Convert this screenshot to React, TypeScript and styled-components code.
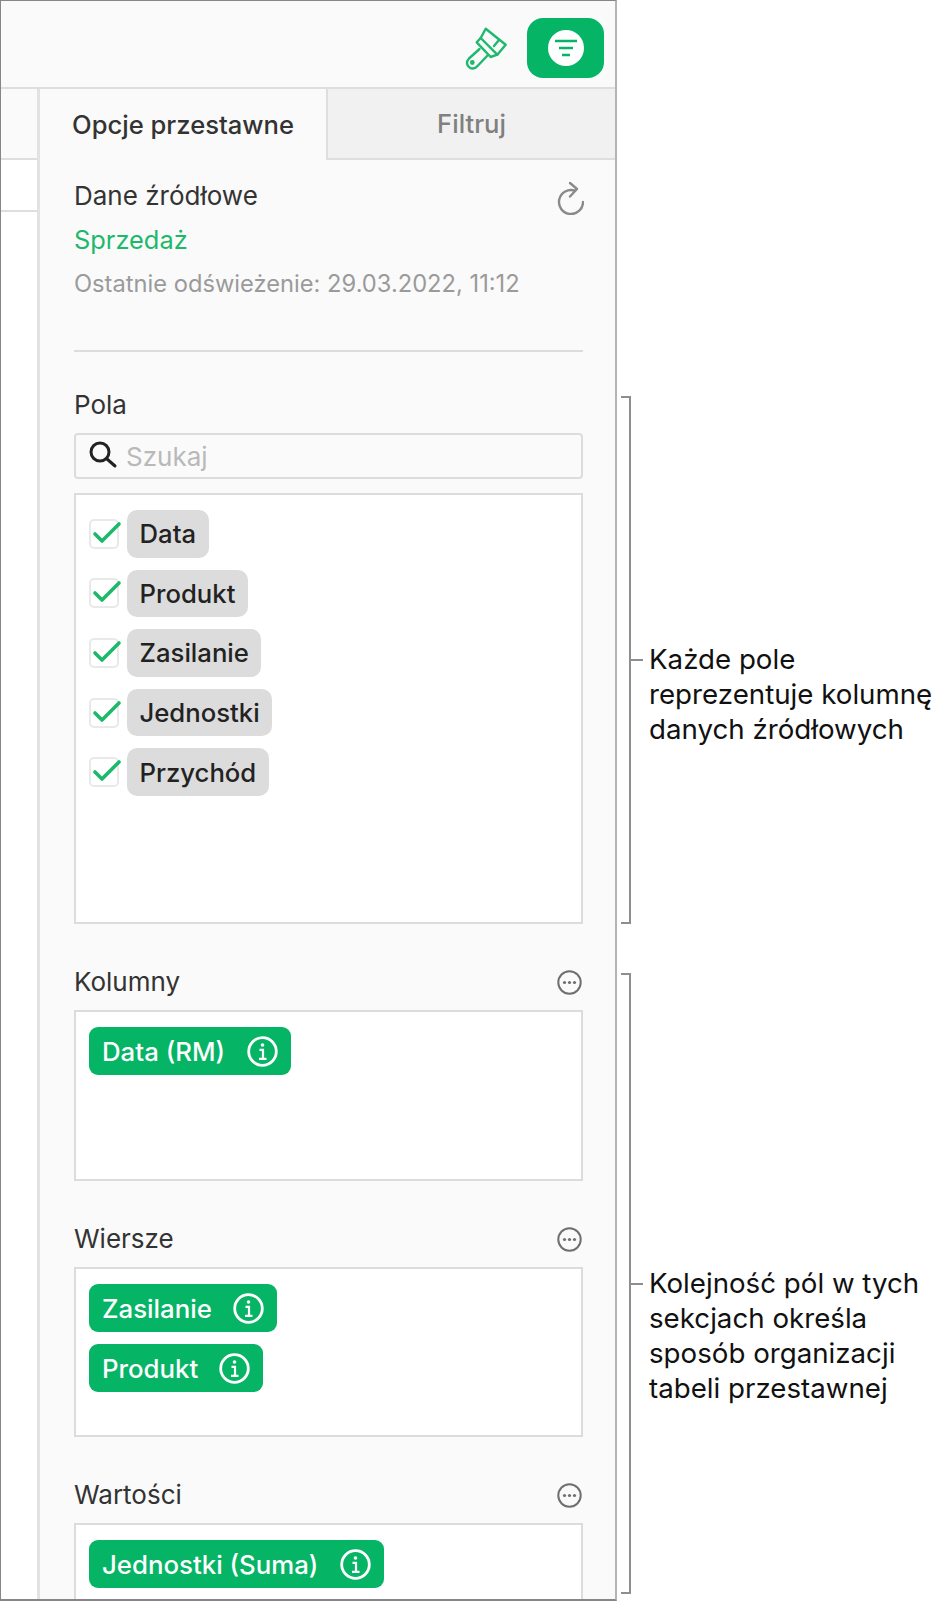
import React from 'react';
import styled, { createGlobalStyle } from 'styled-components';

const green = '#05b465';

const GlobalStyle = createGlobalStyle`
  html, body {
    margin: 0;
    padding: 0;
    background: #fff;
  }
  body {
    font-family: Inter, "Noto Sans", "Liberation Sans", sans-serif;
    -webkit-font-smoothing: antialiased;
  }
`;

const Page = styled.div`
  display: flex;
  width: 943px;
  height: 1602px;
  overflow: hidden;
  background: #fff;
`;

const Window = styled.div`
  flex: none;
  box-sizing: border-box;
  width: 617px;
  height: 1601px;
  display: flex;
  flex-direction: column;
  overflow: hidden;
  background: #fafafa;
  border: 1px solid #85858a;
  border-right: 2px solid #b4b4b6;
  border-bottom-width: 2px;
`;

const Toolbar = styled.div`
  flex: none;
  box-sizing: border-box;
  height: 88px;
  display: flex;
  justify-content: flex-end;
  align-items: center;
  gap: 15px;
  padding: 7px 11px 0 0;
  border-bottom: 2px solid #dedede;
`;

const FormatButton = styled.div`
  width: 77px;
  height: 60px;
  display: flex;
  align-items: center;
  justify-content: center;
  border-radius: 16px;
  background: ${green};
`;

const FormatDisc = styled.div`
  width: 36px;
  height: 36px;
  display: flex;
  align-items: center;
  justify-content: center;
  border-radius: 50%;
  background: #fff;
`;

const Body = styled.div`
  flex: 1;
  min-height: 0;
  display: flex;
`;

const SideStrip = styled.div`
  flex: none;
  width: 36px;
  display: flex;
  flex-direction: column;
  background: #fff;
`;

const StripHead = styled.div`
  box-sizing: border-box;
  height: 71px;
  background: #fafafa;
  border-bottom: 2px solid #dedede;
`;

const StripRow = styled.div`
  box-sizing: border-box;
  height: 52px;
  border-bottom: 2px solid #dedede;
`;

const Panel = styled.div`
  flex: 1;
  min-width: 0;
  display: flex;
  flex-direction: column;
  border-left: 3px solid #e2e2e2;
`;

const Tabs = styled.div`
  flex: none;
  height: 71px;
  display: flex;
`;

const Tab = styled.div<{ $active?: boolean }>`
  box-sizing: border-box;
  width: ${p => (p.$active ? '286px' : 'auto')};
  flex: ${p => (p.$active ? 'none' : '1')};
  display: flex;
  align-items: center;
  justify-content: center;
  padding-bottom: 1px;
  font-size: 25.6px;
  font-weight: 550;
  color: ${p => (p.$active ? '#333' : '#808080')};
  background: ${p => (p.$active ? 'transparent' : '#f1f1f1')};
  border-left: ${p => (p.$active ? 'none' : '2px solid #dedede')};
  border-bottom: ${p => (p.$active ? 'none' : '2px solid #dedede')};
`;

const Content = styled.div`
  padding: 22px 32px 0 34px;
`;

const HeadRow = styled.div`
  height: 28px;
  display: flex;
  align-items: center;
  justify-content: space-between;
`;

const Label = styled.div`
  font-size: 26px;
  line-height: 28px;
  color: #333;
`;

const SourceLink = styled.div`
  margin-top: 16px;
  font-size: 25.4px;
  line-height: 28px;
  color: #1db96b;
`;

const Meta = styled.div`
  margin-top: 16px;
  font-size: 23.7px;
  line-height: 28px;
  color: #9a9a9a;
`;

const Rule = styled.div`
  height: 2px;
  margin: 52px 0 39px;
  background: #dcdcdc;
`;

const Section = styled.div`
  margin-bottom: 44px;
`;

const SearchBox = styled.div`
  box-sizing: border-box;
  height: 46px;
  margin-top: 14px;
  display: flex;
  align-items: center;
  gap: 8px;
  padding-left: 12px;
  border: 2px solid #dcdcdc;
  border-radius: 4px;
  font-size: 26px;
  color: #b9b9b9;
`;

const DropBox = styled.div<{ $height: number }>`
  box-sizing: border-box;
  height: ${p => p.$height}px;
  margin-top: 14px;
  display: flex;
  flex-direction: column;
  align-items: flex-start;
  gap: 12px;
  padding: 15px 13px;
  background: #fff;
  border: 2px solid #dcdcdc;
`;

const FieldRow = styled.div`
  display: flex;
  align-items: center;
  gap: 8px;
`;

const Checkbox = styled.div`
  box-sizing: border-box;
  position: relative;
  width: 30px;
  height: 30px;
  border: 2px solid #e9e9e9;
  border-radius: 5px;
  background: #fff;
`;

const CheckMark = styled.svg`
  position: absolute;
  left: 2px;
  top: 2px;
  overflow: visible;
`;

const FieldChip = styled.div`
  height: 47.6px;
  display: flex;
  align-items: center;
  padding: 0 12.5px;
  border-radius: 10px;
  background: #dcdcdc;
  font-size: 25.7px;
  font-weight: 500;
  color: #222;
`;

const PivotChip = styled.div<{ $gap: number }>`
  height: 48px;
  display: flex;
  align-items: center;
  gap: ${p => p.$gap}px;
  padding: 0 13px;
  border-radius: 9px;
  background: ${green};
  font-size: 25.8px;
  font-weight: 500;
  color: #fff;
`;

const Annotations = styled.div`
  flex: 1;
  display: flex;
  flex-direction: column;
  padding: 396px 0 0 4px;
`;

const Callout = styled.div<{ $top?: number }>`
  display: flex;
  margin-top: ${p => p.$top ?? 0}px;
`;

const Bracket = styled.div<{ $height: number }>`
  box-sizing: border-box;
  flex: none;
  width: 10px;
  height: ${p => p.$height}px;
  border: 2.5px solid #8e8e8e;
  border-left: none;
`;

const Note = styled.div<{ $offset: number }>`
  display: flex;
  margin-top: ${p => p.$offset}px;
`;

const Tick = styled.div`
  flex: none;
  width: 12px;
  height: 2px;
  margin: 17px 6px 0 0;
  background: #8e8e8e;
`;

const NoteText = styled.div`
  font-size: 27.7px;
  line-height: 35px;
  color: #111;
  white-space: nowrap;
`;

const BrushIcon = () => (
  <svg width="48" height="50" viewBox="0 0 48 50" fill="none" stroke="#1fb96d" strokeWidth="2.4" strokeLinejoin="round" strokeLinecap="round">
    <path d="M21.7 5.7 L41.7 21.7 L33.3 31.7 L16.7 15 Z" />
    <path d="M30 23 L35 17" />
    <path d="M16.7 15 L12.7 19.3 L26.7 34 L33.3 31.7" />
    <path d="M15.5 26 L5 35.5 C2 38.5 2.5 42.5 5.5 44.5 C8.5 46.5 11.5 45.5 14 42.5 L24 32" />
    <circle cx="8.3" cy="39.5" r="1.2" />
  </svg>
);

const FilterIcon = () => (
  <svg width="24" height="20" viewBox="0 0 24 20" fill="none" stroke={green} strokeWidth="2.6">
    <path d="M1 3 H23 M5 10 H19 M8 17 H16" />
  </svg>
);

const RefreshGlyph = styled.svg`
  margin-right: -1px;
`;

const RefreshIcon = () => (
  <RefreshGlyph width="30" height="38" viewBox="0 0 30 38" fill="none" stroke="#8a8a8a" strokeWidth="2.4" strokeLinecap="round" strokeLinejoin="round">
    <path d="M21 13.7 A12 12 0 1 0 29 25" />
    <path d="M16 6 L23 12 L16 19.5" />
  </RefreshGlyph>
);

const SearchIcon = () => (
  <svg width="30" height="30" viewBox="0 0 30 30" fill="none" stroke="#222" strokeWidth="3" strokeLinecap="round">
    <circle cx="12" cy="11" r="9" />
    <path d="M19 18 L27 25" />
  </svg>
);

const EllipsisGlyph = styled.svg`
  margin-right: 1px;
`;

const EllipsisIcon = () => (
  <EllipsisGlyph width="25" height="25" viewBox="0 0 25 25" fill="none">
    <circle cx="12.5" cy="12.5" r="11.2" stroke="#6f6f6f" strokeWidth="2" />
    <circle cx="7.5" cy="12.5" r="1.6" fill="#6f6f6f" />
    <circle cx="12.5" cy="12.5" r="1.6" fill="#6f6f6f" />
    <circle cx="17.5" cy="12.5" r="1.6" fill="#6f6f6f" />
  </EllipsisGlyph>
);

const InfoIcon = () => (
  <svg width="31" height="31" viewBox="0 0 31 31" fill="none" stroke="#fff" strokeWidth="2.8">
    <circle cx="15.5" cy="15.5" r="13.8" />
    <path d="M12.5 13.8 H16 V22.5 M12 22.8 H19.5" strokeWidth="2.2" />
    <circle cx="15.5" cy="9" r="1.8" fill="#fff" stroke="none" />
  </svg>
);

const fields = ['Data', 'Produkt', 'Zasilanie', 'Jednostki', 'Przychód'];

const SectionHead = ({ title, more }: { title: string; more?: boolean }) => (
  <HeadRow>
    <Label>{title}</Label>
    {more && <EllipsisIcon />}
  </HeadRow>
);

export default function App() {
  return (
    <Page>
      <GlobalStyle />
      <Window>
        <Toolbar>
          <BrushIcon />
          <FormatButton>
            <FormatDisc>
              <FilterIcon />
            </FormatDisc>
          </FormatButton>
        </Toolbar>
        <Body>
          <SideStrip>
            <StripHead />
            <StripRow />
          </SideStrip>
          <Panel>
            <Tabs>
              <Tab $active>Opcje przestawne</Tab>
              <Tab>Filtruj</Tab>
            </Tabs>
            <Content>
              <HeadRow>
                <Label>Dane źródłowe</Label>
                <RefreshIcon />
              </HeadRow>
              <SourceLink>Sprzedaż</SourceLink>
              <Meta>Ostatnie odświeżenie: 29.03.2022, 11:12</Meta>
              <Rule />

              <Section>
                <SectionHead title="Pola" />
                <SearchBox>
                  <SearchIcon />
                  Szukaj
                </SearchBox>
                <DropBox $height={431}>
                  {fields.map(f => (
                    <FieldRow key={f}>
                      <Checkbox>
                        <CheckMark width="26" height="20" viewBox="0 0 26 20" fill="none" stroke="#1db96b" strokeWidth="3.6" strokeLinecap="round" strokeLinejoin="round">
                          <path d="M2 11 L9 18 L26 1" />
                        </CheckMark>
                      </Checkbox>
                      <FieldChip>{f}</FieldChip>
                    </FieldRow>
                  ))}
                </DropBox>
              </Section>

              <Section>
                <SectionHead title="Kolumny" more />
                <DropBox $height={171}>
                  <PivotChip $gap={22}>
                    Data (RM)
                    <InfoIcon />
                  </PivotChip>
                </DropBox>
              </Section>

              <Section>
                <SectionHead title="Wiersze" more />
                <DropBox $height={170}>
                  <PivotChip $gap={21}>
                    Zasilanie
                    <InfoIcon />
                  </PivotChip>
                  <PivotChip $gap={21}>
                    Produkt
                    <InfoIcon />
                  </PivotChip>
                </DropBox>
              </Section>

              <Section>
                <SectionHead title="Wartości" more />
                <DropBox $height={170}>
                  <PivotChip $gap={22}>
                    Jednostki (Suma)
                    <InfoIcon />
                  </PivotChip>
                </DropBox>
              </Section>
            </Content>
          </Panel>
        </Body>
      </Window>
      <Annotations>
        <Callout>
          <Bracket $height={528} />
          <Note $offset={246}>
            <Tick />
            <NoteText>
              Każde pole
              <br />
              reprezentuje kolumnę
              <br />
              danych źródłowych
            </NoteText>
          </Note>
        </Callout>
        <Callout $top={49}>
          <Bracket $height={621} />
          <Note $offset={293}>
            <Tick />
            <NoteText>
              Kolejność pól w tych
              <br />
              sekcjach określa
              <br />
              sposób organizacji
              <br />
              tabeli przestawnej
            </NoteText>
          </Note>
        </Callout>
      </Annotations>
    </Page>
  );
}
